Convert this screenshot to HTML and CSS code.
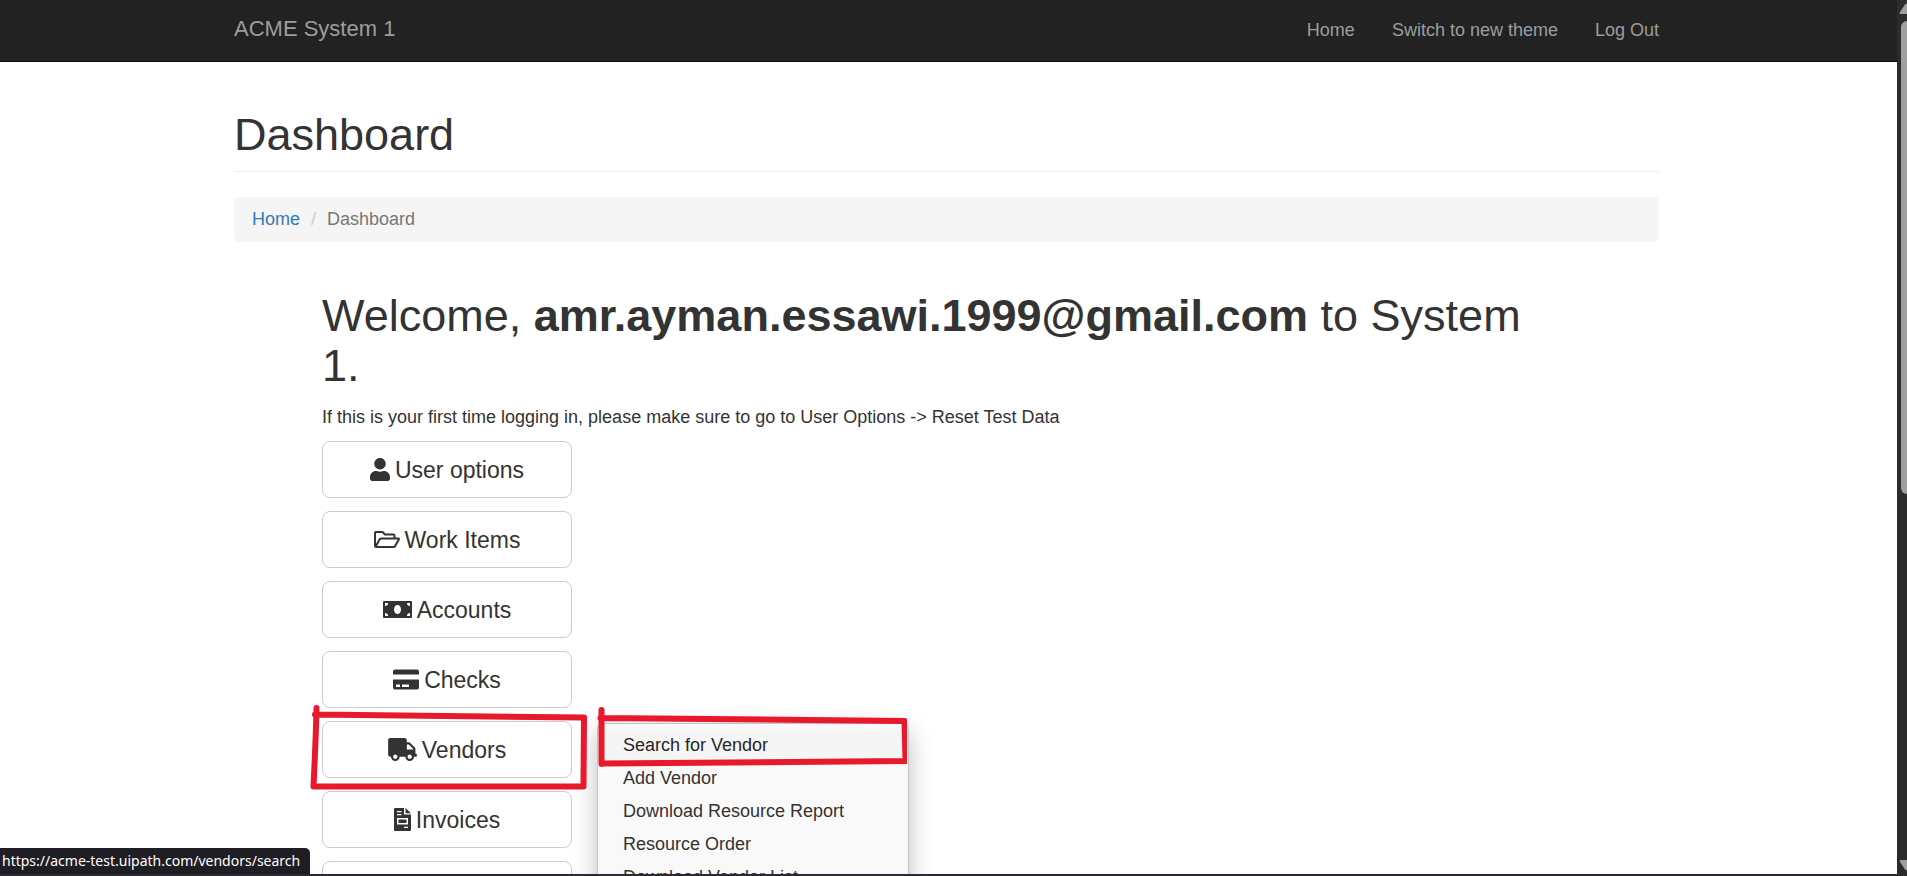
FILE: index.html
```
<!DOCTYPE html>
<html lang="en">
<head>
<meta charset="utf-8">
<title>ACME System 1 - Dashboard</title>
<link rel="stylesheet" href="styles.css">
</head>
<body>
<header class="navbar">
  <div class="container navbar-row">
    <a class="brand" href="#">ACME System 1</a>
    <nav class="nav-links">
      <a href="#">Home</a>
      <a href="#">Switch to new theme</a>
      <a href="#">Log Out</a>
    </nav>
  </div>
</header>

<main class="container content">
  <h1 class="page-title">Dashboard</h1>
  <ol class="breadcrumb">
    <li><a href="#">Home</a></li>
    <li>Dashboard</li>
  </ol>

  <section class="welcome">
    <h2 class="welcome-title">Welcome, <b>amr.ayman.essawi.1999@gmail.com</b> to System 1.</h2>
    <p class="hint">If this is your first time logging in, please make sure to go to User Options -&gt; Reset Test Data</p>
    <div class="menu-buttons">
      <button class="btn" type="button">
        <svg class="icon" width="20" height="23" viewBox="0 0 448 512" aria-hidden="true"><path d="M224 256c70.700 0 128-57.300 128-128S294.700 0 224 0 96 57.300 96 128s57.300 128 128 128zm89.600 32h-16.700c-22.200 10.200-46.900 16-72.900 16s-50.600-5.800-72.900-16h-16.700C60.200 288 0 348.200 0 422.400V464c0 26.500 21.500 48 48 48h352c26.500 0 48-21.500 48-48v-41.600c0-74.200-60.200-134.400-134.400-134.400z"/></svg>
        User options
      </button>
      <button class="btn" type="button">
        <svg class="icon" width="26" height="23" viewBox="0 0 26 23" aria-hidden="true"><path d="M1 18.500V5Q1 4 2 4H8.500L11 6.500H19.500Q20.500 6.500 20.500 7.500V10.500M1.500 19L5.500 11.500Q6 10.500 7 10.500H24.500Q25.300 10.500 24.800 11.500L21.200 18Q20.700 19 19.500 19H2.500Q1 19 1 17.500" fill="none" stroke="currentColor" stroke-width="2" stroke-linejoin="round"/></svg>
        Work Items
      </button>
      <button class="btn" type="button">
        <svg class="icon" width="29" height="23" viewBox="0 0 29 23" aria-hidden="true"><path fill-rule="evenodd" d="M1 3H28Q29 3 29 4V19Q29 20 28 20H1Q0 20 0 19V4Q0 3 1 3ZM14.500 7C12.500 7 11 9 11 11.500S12.500 16 14.500 16 18 14 18 11.500 16.500 7 14.500 7ZM2 5V8Q5 8 5 5ZM2 18V15Q5 15 5 18ZM27 5V8Q24 8 24 5ZM27 18V15Q24 15 24 18Z"/></svg>
        Accounts
      </button>
      <button class="btn" type="button">
        <svg class="icon" width="26" height="23" viewBox="0 0 26 23" aria-hidden="true"><path fill-rule="evenodd" d="M0 6.500V3.500Q0 1.500 2 1.500H24Q26 1.500 26 3.500V6.500ZM0 11.500H26V19.500Q26 21.500 24 21.500H2Q0 21.500 0 19.500ZM3 16.500V19H7V16.500ZM9 16.500V19H16V16.500Z"/></svg>
        Checks
      </button>
      <div class="btn-group">
        <button class="btn" type="button" aria-haspopup="true" aria-expanded="true">
          <svg class="icon" width="29" height="23" viewBox="0 0 640 512" aria-hidden="true"><path d="M624 352h-16V243.900c0-12.700-5.100-24.900-14.100-33.900L494 110.100c-9-9-21.200-14.100-33.900-14.100H416V48c0-26.500-21.500-48-48-48H48C21.500 0 0 21.500 0 48v320c0 26.500 21.500 48 48 48h16c0 53 43 96 96 96s96-43 96-96h128c0 53 43 96 96 96s96-43 96-96h48c8.800 0 16-7.200 16-16v-32c0-8.800-7.200-16-16-16zM160 464c-26.500 0-48-21.500-48-48s21.500-48 48-48 48 21.500 48 48-21.500 48-48 48zm320 0c-26.500 0-48-21.500-48-48s21.500-48 48-48 48 21.500 48 48-21.500 48-48 48zm80-208H416V144h44.100l99.900 99.900V256z"/></svg>
          Vendors
        </button>
        <ul class="dropdown">
          <li><a class="active" href="#">Search for Vendor</a></li>
          <li><a href="#">Add Vendor</a></li>
          <li><a href="#">Download Resource Report</a></li>
          <li><a href="#">Resource Order</a></li>
          <li><a href="#">Download Vendor List</a></li>
        </ul>
      </div>
      <button class="btn" type="button">
        <svg class="icon" width="17" height="23" viewBox="0 0 17 23" aria-hidden="true"><path fill-rule="evenodd" d="M1 0H10V6.500H17V22Q17 23 16 23H1Q0 23 0 22V1Q0 0 1 0ZM3 3V4.300H7.500V3ZM3 6V7.300H7.500V6ZM3 10V16.500H14V10ZM4.500 11.500H12.500V15H4.500ZM10 18.800V20H14V18.800ZM11.500 0L17 5.200H11.500Z"/></svg>
        Invoices
      </button>
      <button class="btn" type="button" aria-label="More"></button>
    </div>
  </section>
</main>

<svg class="marks" width="907" height="790" viewBox="0 0 907 790" aria-hidden="true">
  <path d="M316.500 708Q316 735 313.500 786M315 714.500L584 717.500 583.500 786.500H313.500"/>
  <path d="M601.500 710V764M600.500 718L904.500 721 905.500 761 602 763.500"/>
</svg>

<div class="status-tip">https://acme-test.uipath.com/vendors/search</div>
<div class="bottom-edge"></div>
<div class="scroll-rail" aria-hidden="true">
  <svg width="10" height="20" viewBox="0 0 10 20"><path d="M4 14Q2 14 3 12L8 4.500Q9 3.500 10 3.500V14Z"/></svg>
  <div class="scroll-thumb"></div>
  <svg width="10" height="16" viewBox="0 0 10 16"><path d="M4 0Q2 0 3 2L8 9.500Q9 10.500 10 10.500V0Z"/></svg>
</div>
</body>
</html>
```
FILE: styles.css
```
* { box-sizing: border-box; }
body {
  margin: 0;
  height: 100vh;
  overflow: hidden;
  position: relative;
  background: #fff;
  color: #333;
  font: 18px/25px "Liberation Sans", Arial, sans-serif;
}
a { color: inherit; text-decoration: none; }
.navbar, .content { padding-right: 14px; }
.navbar {
  background: #222;
  border-bottom: 1px solid #080808;
  color: #9d9d9d;
}
.container { max-width: 1425px; margin: 0 auto; }
.navbar-row {
  display: flex;
  justify-content: space-between;
  align-items: baseline;
  padding: 15px 0 17px;
  line-height: 27px;
}
.brand { font-size: 22px; }
.nav-links { display: flex; gap: 37px; }
.content {
  max-width: 1439px;
  padding-top: 48px;
}
.page-title, .welcome-title {
  margin: 0;
  font-size: 45px;
  line-height: 50px;
  font-weight: 400;
}
.page-title {
  padding-bottom: 11px;
  border-bottom: 1px solid #eee;
}
.welcome-title { max-width: 1240px; }
.breadcrumb {
  display: flex;
  list-style: none;
  margin: 25px 0 49px;
  padding: 10px 18px;
  border-radius: 5px;
  background: #f5f5f5;
  color: #777;
}
.breadcrumb a { color: #337ab7; }
.breadcrumb li + li::before {
  content: "/";
  padding: 0 11px;
  color: #ccc;
}
.welcome { padding: 0 88px; }
.hint { margin: 14px 0 11px; }
.menu-buttons {
  display: flex;
  flex-direction: column;
  align-items: flex-start;
  gap: 13px;
}
.btn {
  display: flex;
  align-items: center;
  justify-content: center;
  gap: 5px;
  width: 250px;
  min-height: 57px;
  padding: 0;
  border: 1px solid #ccc;
  border-radius: 8px;
  background: #fff;
  color: #333;
  font: 23px/30px "Liberation Sans", Arial, sans-serif;
}
.icon { fill: currentColor; }
.btn-group { position: relative; }
.dropdown {
  position: absolute;
  left: 275px;
  top: 2px;
  width: 312px;
  margin: 0;
  padding: 5px 0;
  list-style: none;
  border: 1px solid #c4c4c4;
  border-radius: 5px;
  background: #f9f9f9;
  box-shadow: 0 8px 24px rgba(0, 0, 0, 0.25);
}
.dropdown a {
  display: block;
  padding: 4px 25px;
}
.dropdown .active { background: #f5f5f5; color: #262626; }
.marks {
  position: absolute;
  left: 0;
  top: 0;
  fill: none;
  stroke: #e8192c;
  stroke-width: 6;
  stroke-linecap: round;
  stroke-linejoin: round;
  pointer-events: none;
}
.status-tip {
  position: absolute;
  left: 0;
  bottom: 2px;
  padding: 2px 10px 2px 2px;
  border-top-right-radius: 5px;
  background: #1f1e24;
  color: #fff;
  font: 14px/22px "Noto Sans", sans-serif;
}
.bottom-edge {
  position: absolute;
  left: 0;
  right: 0;
  bottom: 0;
  height: 2px;
  background: #2b2a30;
}
.scroll-rail {
  position: absolute;
  top: 0;
  right: 0;
  bottom: 0;
  width: 10px;
  display: flex;
  flex-direction: column;
  justify-content: space-between;
  background: #2c2c2c;
  fill: #9f9f9f;
}
.scroll-rail svg { display: block; flex: none; }
.scroll-thumb {
  width: 6px;
  height: 54%;
  margin: 1px 0 auto 4px;
  border-radius: 6px 0 0 6px;
  background: #9f9f9f;
}
```
